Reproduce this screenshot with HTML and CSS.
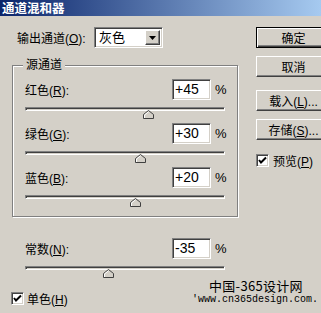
FILE: index.html
```html
<!DOCTYPE html>
<html lang="zh-CN">
<head>
    <meta charset="UTF-8">
    <title>通道混和器</title>
    <link rel="stylesheet" href="styles.css">
</head>
<body>
    <div class="dialog">
        <div class="titlebar">通道混和器</div>
        <div class="content">
            <div class="main">
                <div class="output-row">
                    <span class="output-label">输出通道(<u>O</u>):</span>
                    <div class="select">
                        <span class="select-value">灰色</span>
                        <span class="select-btn">
                            <svg width="7" height="4" viewBox="0 0 7 4"><polygon points="0,0 7,0 3.5,4" fill="#000"/></svg>
                        </span>
                    </div>
                </div>

                <div class="group">
                    <span class="legend">源通道</span>
                    <div class="row">
                        <div class="field-line">
                            <span class="field-label">红色(<u>R</u>):</span>
                            <div class="num">+45</div>
                            <span class="pct">%</span>
                        </div>
                        <div class="slider">
                            <div class="track"></div>
                            <svg class="thumb" style="left: 61.25%" width="11" height="9" viewBox="0 0 11 9"><polygon points="0.5,8.5 0.5,4.5 5.5,0.5 10.5,4.5 10.5,8.5" fill="#d4d0c8" stroke="#404040"/><polyline points="1.5,8 1.5,5 5.5,1.8" fill="none" stroke="#fff"/></svg>
                        </div>
                    </div>
                    <div class="row">
                        <div class="field-line">
                            <span class="field-label">绿色(<u>G</u>):</span>
                            <div class="num">+30</div>
                            <span class="pct">%</span>
                        </div>
                        <div class="slider">
                            <div class="track"></div>
                            <svg class="thumb" style="left: 57.5%" width="11" height="9" viewBox="0 0 11 9"><polygon points="0.5,8.5 0.5,4.5 5.5,0.5 10.5,4.5 10.5,8.5" fill="#d4d0c8" stroke="#404040"/><polyline points="1.5,8 1.5,5 5.5,1.8" fill="none" stroke="#fff"/></svg>
                        </div>
                    </div>
                    <div class="row">
                        <div class="field-line">
                            <span class="field-label">蓝色(<u>B</u>):</span>
                            <div class="num">+20</div>
                            <span class="pct">%</span>
                        </div>
                        <div class="slider">
                            <div class="track"></div>
                            <svg class="thumb" style="left: 55%" width="11" height="9" viewBox="0 0 11 9"><polygon points="0.5,8.5 0.5,4.5 5.5,0.5 10.5,4.5 10.5,8.5" fill="#d4d0c8" stroke="#404040"/><polyline points="1.5,8 1.5,5 5.5,1.8" fill="none" stroke="#fff"/></svg>
                        </div>
                    </div>
                </div>

                <div class="constant row">
                    <div class="field-line">
                        <span class="field-label">常数(<u>N</u>):</span>
                        <div class="num">-35</div>
                        <span class="pct">%</span>
                    </div>
                    <div class="slider">
                        <div class="track"></div>
                        <svg class="thumb" style="left: 41.25%" width="11" height="9" viewBox="0 0 11 9"><polygon points="0.5,8.5 0.5,4.5 5.5,0.5 10.5,4.5 10.5,8.5" fill="#d4d0c8" stroke="#404040"/><polyline points="1.5,8 1.5,5 5.5,1.8" fill="none" stroke="#fff"/></svg>
                    </div>
                </div>

                <label class="check mono-check">
                    <span class="box">
                        <svg width="9" height="9" viewBox="0 0 9 9"><polyline points="1,4 3,6.5 8,1.5" fill="none" stroke="#000" stroke-width="2"/></svg>
                    </span>
                    <span>单色(<u>H</u>)</span>
                </label>
            </div>

            <div class="side">
                <button class="btn default">确定</button>
                <button class="btn cancel">取消</button>
                <button class="btn load">载入(<u>L</u>)...</button>
                <button class="btn save">存储(<u>S</u>)...</button>
                <label class="check preview-check">
                    <span class="box">
                        <svg width="9" height="9" viewBox="0 0 9 9"><polyline points="1,4 3,6.5 8,1.5" fill="none" stroke="#000" stroke-width="2"/></svg>
                    </span>
                    <span>预览(<u>P</u>)</span>
                </label>
            </div>
        </div>

        <div class="watermark">
            <div class="wm-name">中国-365设计网</div>
            <div class="wm-url">'www.cn365design.com.</div>
        </div>
    </div>
</body>
</html>
```

FILE: styles.css
```css
* {
    margin: 0;
    padding: 0;
    box-sizing: border-box;
}

body {
    width: 321px;
    height: 313px;
    overflow: hidden;
    background: #d4d0c8;
    font-family: "Liberation Sans", "Noto Sans CJK SC", sans-serif;
    font-size: 12px;
    color: #000;
}

.dialog {
    position: relative;
    height: 313px;
}

.titlebar {
    height: 16px;
    padding-left: 2px;
    background: linear-gradient(to right, #0a246a, #a6caf0);
    color: #fff;
    font-family: "Noto Sans CJK SC", sans-serif;
    font-weight: bold;
    font-size: 12.5px;
    line-height: 16px;
}

.content {
    display: flex;
}

.main {
    width: 256px;
    flex-shrink: 0;
    padding-left: 11px;
}

/* output channel */
.output-row {
    display: flex;
    align-items: center;
    height: 21px;
    margin-top: 11px;
    padding-left: 6px;
}

.output-label {
    width: 77px;
}

.select {
    display: flex;
    width: 69px;
    height: 21px;
    background: #fff;
    border: 1px solid;
    border-color: #808080 #fff #fff #808080;
    box-shadow: inset 1px 1px #404040, inset -1px -1px #d4d0c8;
    padding: 2px;
}

.select-value {
    flex: 1;
    padding-left: 2px;
    font-size: 13px;
    line-height: 15px;
}

.select-btn {
    width: 15px;
    height: 15px;
    display: flex;
    align-items: center;
    justify-content: center;
    background: #d4d0c8;
    border: 1px solid;
    border-color: #fff #404040 #404040 #fff;
    box-shadow: inset -1px -1px #808080;
}

/* source channels group */
.group {
    position: relative;
    width: 226px;
    margin-top: 17px;
    margin-left: 1px;
    padding: 13px 11px 5px 12px;
    border: 1px solid #808080;
    box-shadow: inset 1px 1px #fff, 1px 1px #fff;
}

.legend {
    position: absolute;
    top: -8px;
    left: 10px;
    padding: 0 3px;
    background: #d4d0c8;
    line-height: 14px;
}

.row {
    height: 44px;
}

.field-line {
    display: flex;
    align-items: center;
    height: 21px;
}

.field-label {
    flex: 1;
}

.num {
    width: 39px;
    height: 21px;
    padding-left: 2px;
    background: #fff;
    border: 1px solid;
    border-color: #808080 #fff #fff #808080;
    box-shadow: inset 1px 1px #404040, inset -1px -1px #d4d0c8;
    font-size: 14px;
    line-height: 19px;
}

.pct {
    width: 15px;
    padding-left: 4px;
    font-size: 13px;
}

.slider {
    position: relative;
    width: 200px;
    height: 23px;
}

.track {
    height: 4px;
    margin-top: 7px;
    border: 1px solid;
    border-color: #808080 #fff #fff #808080;
    background: #d4d0c8;
    box-shadow: inset 1px 1px #404040;
}

.thumb {
    position: absolute;
    top: 3px;
    margin-left: -5px;
}

.constant {
    width: 201px;
    margin-top: 21px;
    margin-left: 14px;
}

/* checkboxes */
.check {
    display: flex;
    align-items: center;
    gap: 3px;
    height: 13px;
}

.box {
    width: 13px;
    height: 13px;
    display: flex;
    align-items: center;
    justify-content: center;
    background: #fff;
    border: 1px solid;
    border-color: #808080 #fff #fff #808080;
    box-shadow: inset 1px 1px #404040, inset -1px -1px #d4d0c8;
}

.mono-check {
    margin-top: 10px;
}

.preview-check {
    margin-top: 14px;
    gap: 4px;
}

/* buttons */
.side {
    width: 75px;
    flex-shrink: 0;
    padding-top: 11px;
}

.btn {
    display: block;
    width: 75px;
    height: 21px;
    background: #d4d0c8;
    border: 1px solid;
    border-color: #fff #404040 #404040 #fff;
    box-shadow: inset -1px -1px #808080;
    font-family: "Liberation Sans", "Noto Sans CJK SC", sans-serif;
    font-size: 12px;
    color: #000;
}

.btn.default {
    border: 1px solid #000;
    box-shadow: inset 1px 1px #fff, inset -1px -1px #404040, inset -2px -2px #808080;
}

.btn.cancel {
    margin-top: 8px;
}

.btn.load {
    margin-top: 13px;
}

.btn.save {
    margin-top: 8px;
}

/* watermark */
.watermark {
    position: absolute;
    left: 192px;
    top: 279px;
}

.wm-name {
    padding-left: 17px;
    font-family: "Noto Sans CJK SC", sans-serif;
    font-size: 13px;
    line-height: 13px;
    letter-spacing: 0.3px;
}

.wm-url {
    margin-top: 3px;
    font-family: "Liberation Mono", monospace;
    font-size: 10px;
    line-height: 10px;
}
```
